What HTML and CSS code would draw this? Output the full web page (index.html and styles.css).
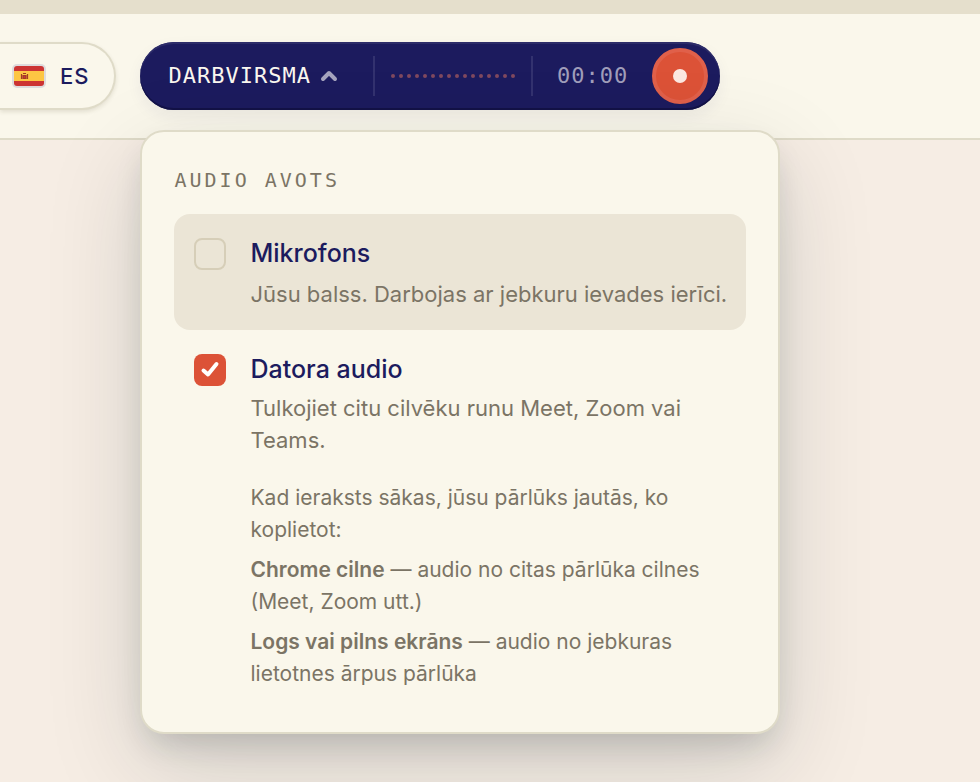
FILE: index.html
```html
<!DOCTYPE html>
<html lang="lv">
<head>
<meta charset="utf-8">
<meta name="viewport" content="width=device-width, initial-scale=1">
<title>Audio avots</title>
<link rel="stylesheet" href="styles.css">
</head>
<body>
<header class="topbar">
  <button class="language" type="button">
    <svg class="flag" viewBox="0 0 34 24" aria-hidden="true">
      <rect width="34" height="24" rx="5" fill="#dedbdc"/>
      <rect x="2" y="2" width="30" height="20" rx="3" fill="#cc3433"/>
      <rect x="2" y="7" width="30" height="10" fill="#fdc643"/>
      <path d="M9.500 10v5M15.500 10v5M11 11.500h3v3h-3zM11 9.500h3" fill="#cc3433" stroke="#a33a25" stroke-width="1.200"/>
    </svg>
    <span>ES</span>
  </button>
  <div class="recorder">
    <button class="source" type="button" aria-expanded="true">
      <span>DARBVIRSMA</span>
      <svg class="chevron" viewBox="0 0 16 10" aria-hidden="true"><path d="M2 8l6-6 6 6"/></svg>
    </button>
    <div class="level">
      <svg viewBox="0 0 124 4" aria-hidden="true"><path d="M2 2H122.500"/></svg>
    </div>
    <span class="timer">00:00</span>
    <button class="record" type="button" aria-label="Ierakstīt"></button>
    <section class="popover">
      <h2>AUDIO AVOTS</h2>
      <label class="option active">
        <input type="checkbox">
        <span class="copy">
          <span class="name">Mikrofons</span>
          <span class="summary">Jūsu balss. Darbojas ar jebkuru ievades ierīci.</span>
        </span>
      </label>
      <label class="option">
        <input type="checkbox" checked>
        <span class="copy">
          <span class="name">Datora audio</span>
          <span class="text">Tulkojiet citu cilvēku runu Meet, Zoom vai Teams.</span>
          <span class="text hint">Kad ieraksts sākas, jūsu pārlūks jautās, ko koplietot:</span>
          <span class="text point"><b>Chrome cilne</b> — audio no citas pārlūka cilnes (Meet, Zoom utt.)</span>
          <span class="text point"><b>Logs vai pilns ekrāns</b> — audio no jebkuras lietotnes ārpus pārlūka</span>
        </span>
      </label>
    </section>
  </div>
</header>
</body>
</html>
```
FILE: styles.css
```css
* { box-sizing: border-box; }

body {
  margin: 0;
  min-height: 100vh;
  background: #f6ede4;
  color: #7b7465;
  font: 22px/32px Inter, "Liberation Sans", sans-serif;
}

button { border: 0; margin: 0; font: inherit; cursor: pointer; }

.topbar {
  display: flex;
  align-items: center;
  gap: 24px;
  padding: 28px 0;
  border-top: 14px solid #e5dfcc;
  border-bottom: 2px solid #dfdbc8;
  background: #faf7eb;
}

.language {
  display: flex;
  align-items: center;
  gap: 14px;
  height: 68px;
  padding: 0 25px 0 12px;
  border: 2px solid #dfdbc8;
  border-left: 0;
  border-radius: 0 34px 34px 0;
  background: #faf7eb;
  box-shadow: 0 2px 4px rgb(60 50 20 / 12%);
  color: #1c1b5e;
  font-weight: 500;
  letter-spacing: 1px;
}

.flag { width: 34px; height: 24px; }

.recorder {
  position: relative;
  display: flex;
  align-items: center;
  height: 68px;
  padding: 0 12px 0 28px;
  border-radius: 34px;
  background: #1c1b5e;
  box-shadow: inset 0 2px #2d2c69, inset 0 -2px #131247, 0 6px 16px rgb(28 27 94 / 6%);
}

.source {
  display: flex;
  align-items: center;
  gap: 10px;
  padding: 0 36px 0 0;
  background: none;
  color: #faf7ef;
  font-family: "DejaVu Sans Mono", monospace;
  letter-spacing: 1px;
}

.chevron { width: 16px; height: 10px; overflow: visible; }
.chevron path { fill: none; stroke: #a6a4be; stroke-width: 4; stroke-linecap: round; stroke-linejoin: round; }

.level {
  display: flex;
  align-items: center;
  height: 40px;
  padding: 0 16px;
  border-left: 2px solid #33326f;
  border-right: 2px solid #33326f;
}
.level svg { width: 124px; height: 4px; overflow: visible; }
.level path { stroke: #80495f; stroke-width: 4; stroke-linecap: round; stroke-dasharray: 0 8; }

.timer {
  padding: 0 24px;
  color: #a09eba;
  font-family: "DejaVu Sans Mono", monospace;
  letter-spacing: 1px;
}

.record {
  display: grid;
  place-items: center;
  width: 56px;
  height: 56px;
  padding: 0;
  border: 4px solid #e0604a;
  border-radius: 50%;
  background: #dc5237;
}
.record::before { content: ""; width: 14px; height: 14px; border-radius: 50%; background: #fce8e1; }

.popover {
  position: absolute;
  top: 88px;
  left: 0;
  width: 640px;
  padding: 32px;
  border: 2px solid #dfdbc8;
  border-radius: 24px;
  background: #faf7eb;
  box-shadow: 0 16px 32px -8px rgb(10 30 40 / 18%), 0 32px 96px rgb(10 30 40 / 16%);
}

h2 {
  margin: 0 0 18px;
  font: 20px/32px "DejaVu Sans Mono", monospace;
  letter-spacing: 3px;
}

.option {
  display: flex;
  align-items: flex-start;
  gap: 24px;
  padding: 20px 20px 10px;
  border-radius: 16px;
}
.option.active { padding-bottom: 18px; background: #ebe5d6; }

.option input {
  appearance: none;
  flex: none;
  width: 32px;
  height: 32px;
  margin: 4px 0 0;
  border: 2px solid #d6ceb8;
  border-radius: 8px;
}
.option input:checked {
  border: 0;
  background: #dc5237 url("data:image/svg+xml,%3Csvg xmlns='http://www.w3.org/2000/svg' viewBox='0 0 32 32'%3E%3Cpath d='M9.500 16.500L14 20.500L22.500 10' fill='none' stroke='white' stroke-width='4' stroke-linecap='round' stroke-linejoin='round'/%3E%3C/svg%3E");
}

.copy, .name, .summary, .text { display: block; }
.copy { flex: 1; min-width: 0; }
.name { margin-bottom: 4px; color: #1c1b5e; font-size: 25px; font-weight: 500; line-height: 38px; }
.summary { line-height: 36px; white-space: nowrap; }
.hint { margin-top: 26px; font-size: 21px; }
.point { margin-top: 8px; font-size: 21px; }
b { font-weight: 600; }
```
